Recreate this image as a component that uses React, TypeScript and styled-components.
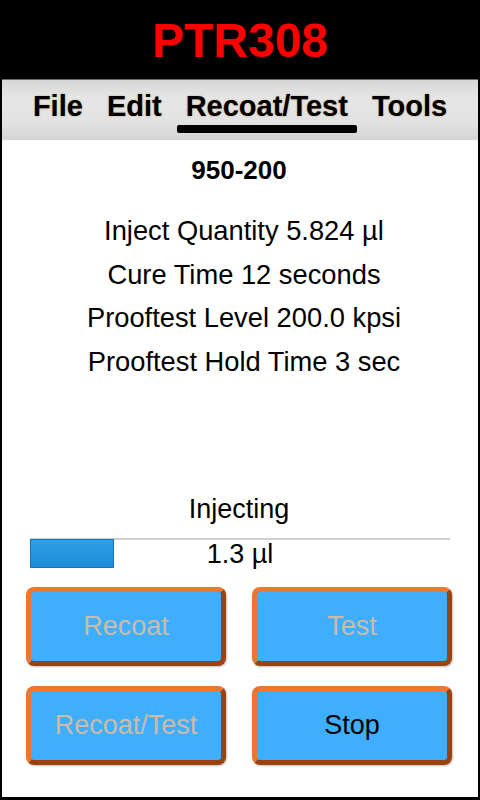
import React from "react";
import styled, { createGlobalStyle } from "styled-components";

const Global = createGlobalStyle`
  html, body { margin: 0; padding: 0; background: #fff; }
  body { font-family: "Liberation Sans", Arial, sans-serif; }
  * { box-sizing: border-box; }
`;

const Frame = styled.div`
  width: 480px;
  height: 800px;
  border: 2px solid #000;
  border-bottom-width: 3px;
  display: flex;
  flex-direction: column;
  background: #fff;
  overflow: hidden;
`;

const Header = styled.header`
  height: 77px;
  background: #000;
  display: flex;
  align-items: center;
  justify-content: center;
`;

const Title = styled.h1`
  margin: 0;
  color: #ff0000;
  font-size: 48px;
  font-weight: bold;
  line-height: 1;
`;

const MenuBar = styled.nav`
  height: 61px;
  border-top: 1px solid #6a6a6a;
  background: linear-gradient(#d6d6d6, #e6e6e6 30%, #e2e2e2 70%, #d4d4d4);
  display: flex;
  justify-content: center;
  gap: 6px;
  padding-top: 10px;
`;

const MenuItem = styled.div<{ $active?: boolean }>`
  position: relative;
  padding: 0 9px;
  height: 32px;
  font-size: 29px;
  font-weight: bold;
  line-height: 32px;
  color: #000;
  text-shadow: 0 0 1.5px rgba(140, 90, 20, 0.7);
  &::after {
    content: "";
    display: ${(p) => (p.$active ? "block" : "none")};
    position: absolute;
    left: 0;
    right: 0;
    top: 35px;
    height: 8px;
    border-radius: 2px;
    background: #000;
  }
`;

const Content = styled.main`
  flex: 1;
  display: flex;
  flex-direction: column;
  padding: 15px 26px 32px 24px;
`;

const Part = styled.div`
  text-align: center;
  font-size: 26px;
  font-weight: bold;
  line-height: 30px;
`;

const InfoList = styled.div`
  margin-top: 24px;
  padding-left: 10px;
  display: flex;
  flex-direction: column;
  align-items: center;
`;

const InfoLine = styled.div`
  font-size: 27.3px;
  line-height: 43.5px;
  color: #000;
`;

const Bottom = styled.section`
  margin-top: auto;
  display: flex;
  flex-direction: column;
`;

const Status = styled.div`
  text-align: center;
  font-size: 27px;
  line-height: 30px;
`;

const Progress = styled.div`
  position: relative;
  margin: 14px 2px 0 4px;
  height: 30px;
  border-top: 2px solid #cfcfcf;
`;

const Fill = styled.div`
  position: absolute;
  left: 0;
  top: -1px;
  bottom: 0;
  background: linear-gradient(#2fa0ea, #1d8bd6);
  border: 1px solid #1677c0;
`;

const ProgressLabel = styled.div`
  position: relative;
  text-align: center;
  font-size: 27px;
  line-height: 28px;
`;

const ButtonGrid = styled.div`
  margin-top: 19px;
  display: grid;
  grid-template-columns: 200px 200px;
  grid-auto-rows: 79px;
  column-gap: 26px;
  row-gap: 20px;
`;

const ActionButton = styled.button<{ $enabled?: boolean }>`
  font-family: "Liberation Sans", Arial, sans-serif;
  font-size: 27px;
  color: ${(p) => (p.$enabled ? "#000" : "#cbbba8")};
  background: #3faefd;
  border: 5px solid;
  border-color: #ee7630 #9c420f #9c420f #ee7630;
  border-radius: 8px;
  box-shadow: 1px 1px 2px rgba(0, 0, 0, 0.25);
  padding: 0;
  margin: 0;
`;

export default function App() {
  const progress = 84 / 420;
  return (
    <>
      <Global />
      <Frame>
        <Header>
          <Title>PTR308</Title>
        </Header>
        <MenuBar>
          <MenuItem>File</MenuItem>
          <MenuItem>Edit</MenuItem>
          <MenuItem $active>Recoat/Test</MenuItem>
          <MenuItem>Tools</MenuItem>
        </MenuBar>
        <Content>
          <Part>950-200</Part>
          <InfoList>
            <InfoLine>Inject Quantity 5.824 µl</InfoLine>
            <InfoLine>Cure Time 12 seconds</InfoLine>
            <InfoLine>Prooftest Level 200.0 kpsi</InfoLine>
            <InfoLine>Prooftest Hold Time 3 sec</InfoLine>
          </InfoList>
          <Bottom>
            <Status>Injecting</Status>
            <Progress>
              <Fill style={{ width: `${progress * 100}%` }} />
              <ProgressLabel>1.3 µl</ProgressLabel>
            </Progress>
            <ButtonGrid>
              <ActionButton>Recoat</ActionButton>
              <ActionButton>Test</ActionButton>
              <ActionButton>Recoat/Test</ActionButton>
              <ActionButton $enabled>Stop</ActionButton>
            </ButtonGrid>
          </Bottom>
        </Content>
      </Frame>
    </>
  );
}
